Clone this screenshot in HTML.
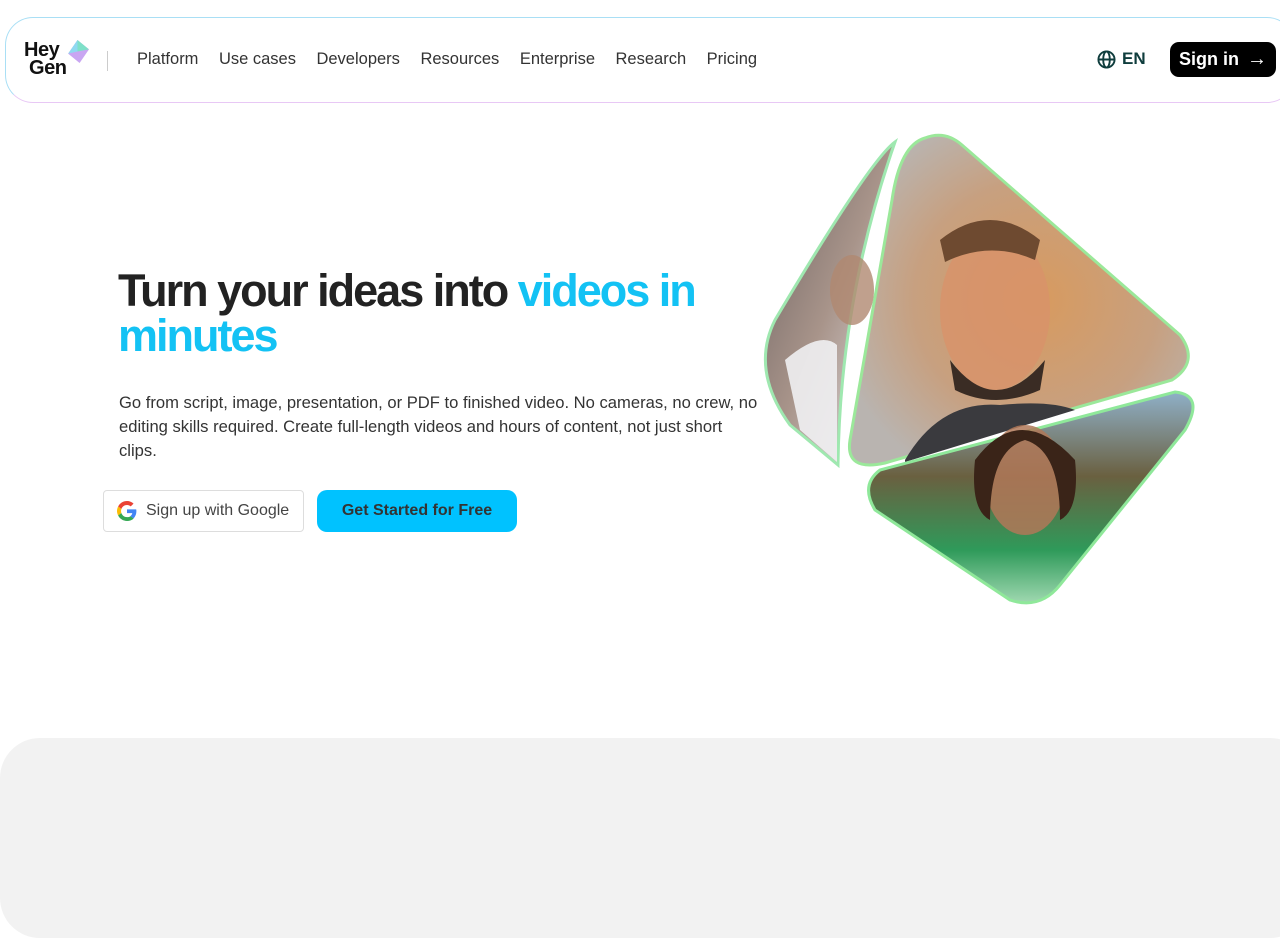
<!DOCTYPE html>
<html><head><meta charset="utf-8">
<style>
*{margin:0;padding:0;box-sizing:border-box}
body{width:1280px;height:853px;overflow:hidden;background:#fff;font-family:"Liberation Sans",sans-serif;position:relative}
.nav{position:absolute;left:5px;top:17px;width:1290px;height:86px;border-radius:28px;border:1.5px solid #a9dff5;border-bottom-color:#e8c8f5;background:#fff}
.logo{position:absolute;left:24px;top:41px;font-weight:bold;font-size:20px;line-height:18px;color:#111;letter-spacing:-0.5px}
.sep{position:absolute;left:107px;top:51px;width:1px;height:20px;background:#ccc}
.links{position:absolute;left:137px;top:50px;font-size:16.5px;color:#333;display:flex;gap:20.5px}
.en{position:absolute;left:1097px;top:49px;font-weight:bold;font-size:17px;color:#0f3d3d;display:flex;align-items:center;gap:6px}
.sign{position:absolute;left:1170px;top:42px;width:106px;height:35px;background:#000;border-radius:9px;color:#fff;font-weight:bold;font-size:18px;display:flex;align-items:center;justify-content:center;gap:8px}
h1{position:absolute;left:118px;top:268px;font-size:45px;line-height:45px;font-weight:bold;color:#222;letter-spacing:-2px;width:640px}
h1 span{color:#13c2f4}
p.d{position:absolute;left:119px;top:391px;width:642px;font-size:16.6px;line-height:24px;color:#333}
.g{position:absolute;left:103px;top:490px;width:201px;height:42px;border:1px solid #ddd;border-radius:4px;display:flex;align-items:center;padding-left:13px;gap:9px;font-size:16px;color:#444}
.b{position:absolute;left:317px;top:490px;width:200px;height:42px;background:#00c2ff;border-radius:10px;font-weight:bold;font-size:16px;color:#333;display:flex;align-items:center;justify-content:center}
.bot{position:absolute;left:0;top:738px;width:1310px;height:200px;background:#f2f2f2;border-radius:40px}
</style></head><body>
<div class="nav"></div>
<div class="logo">Hey<br>&nbsp;Gen</div>
<svg style="position:absolute;left:65px;top:39px" width="25" height="25" viewBox="0 0 24 24"><path d="M12 1 L23 10 L14 23 L3 14 Z" fill="#c9a6f2"/><path d="M12 1 L23 10 L12 12 Z" fill="#7ee0c8"/><path d="M3 14 L12 1 L12 12Z" fill="#8fd9f0"/></svg>
<div class="sep"></div>
<div class="links"><span>Platform</span><span>Use cases</span><span>Developers</span><span>Resources</span><span>Enterprise</span><span>Research</span><span>Pricing</span></div>
<div class="en"><svg width="19" height="19" viewBox="0 0 20 20" fill="none" stroke="#0f3d3d" stroke-width="2"><circle cx="10" cy="10" r="8.5"/><ellipse cx="10" cy="10" rx="3.5" ry="8.5"/><path d="M1.5 10h17"/></svg>EN</div>
<div class="sign">Sign in <span style="font-size:20px">→</span></div>
<h1>Turn your ideas into <span>videos in minutes</span></h1>
<p class="d">Go from script, image, presentation, or PDF to finished video. No cameras, no crew, no editing skills required. Create full-length videos and hours of content, not just short clips.</p>
<div class="g"><svg width="20" height="20" viewBox="0 0 48 48"><path fill="#EA4335" d="M24 9.5c3.5 0 6.6 1.2 9 3.5l6.7-6.7C35.6 2.4 30.2 0 24 0 14.6 0 6.6 5.4 2.7 13.300l7.8 6C12.4 13.7 17.7 9.5 24 9.5z"/><path fill="#4285F4" d="M46.5 24.5c0-1.6-.1-3.1-.4-4.5H24v9h12.7c-.6 3-2.2 5.5-4.7 7.2l7.3 5.7c4.3-4 7.2-9.900 7.2-17.4z"/><path fill="#FBBC05" d="M10.5 28.7c-.5-1.5-.8-3-.8-4.7s.3-3.2.8-4.700l-7.8-6C1 16.6 0 20.2 0 24s1 7.4 2.7 10.7l7.8-6z"/><path fill="#34A853" d="M24 48c6.5 0 11.9-2.1 15.9-5.8l-7.3-5.7c-2.2 1.5-5 2.3-8.600 2.3-6.3 0-11.6-4.2-13.5-9.9l-7.8 6C6.6 42.6 14.6 48 24 48z"/></svg>Sign up with Google</div>
<div class="b">Get Started for Free</div>
<svg style="position:absolute;left:740px;top:120px" width="480" height="490" viewBox="740 120 480 490">
<defs>
<radialGradient id="m" cx="0.55" cy="0.5" r="0.6"><stop offset="0" stop-color="#d89a5e"/><stop offset="0.6" stop-color="#c7a080"/><stop offset="1" stop-color="#b9b4b0"/></radialGradient>
<linearGradient id="l" x1="0" y1="0" x2="1" y2="1"><stop offset="0" stop-color="#6a6060"/><stop offset="0.5" stop-color="#a8948a"/><stop offset="1" stop-color="#e8e8ee"/></linearGradient>
<linearGradient id="bt" x1="0" y1="0" x2="0" y2="1"><stop offset="0" stop-color="#8fb0c8"/><stop offset="0.4" stop-color="#6a6040"/><stop offset="0.75" stop-color="#2f9a5a"/><stop offset="1" stop-color="#9fd8b0"/></linearGradient>
</defs>
<path d="M895 142 Q870 160 775 320 Q750 370 790 425 L838 465 Q840 300 895 142Z" fill="url(#l)" stroke="#9fe8b0" stroke-width="3"/>
<path d="M925 138 Q900 145 892 200 L850 440 Q845 472 885 463 L1172 380 Q1200 362 1180 335 L962 145 Q945 130 925 138Z" fill="url(#m)" stroke="#9be89a" stroke-width="3"/>
<ellipse cx="995" cy="310" rx="55" ry="80" fill="#d8926a" opacity="0.8"/>
<path d="M940 240 Q990 200 1040 240 L1035 260 Q990 240 945 262Z" fill="#6e4a30"/>
<path d="M950 360 Q995 420 1045 360 L1040 390 Q995 410 955 390Z" fill="#3a2c24"/>
<path d="M905 460 Q940 400 1000 405 Q1050 400 1075 410 L905 462Z" fill="#3a3a3e"/>
<path d="M880 470 Q860 485 875 510 L1010 600 Q1040 610 1060 585 L1185 430 Q1205 395 1175 392 Z" fill="url(#bt)" stroke="#8fe89a" stroke-width="3"/>
<ellipse cx="1025" cy="480" rx="40" ry="55" fill="#b07858" opacity="0.85"/>
<path d="M975 460 Q1020 400 1075 460 Q1080 510 1060 520 Q1060 450 1025 440 Q990 450 990 520 Q970 510 975 460Z" fill="#3a2418"/>
<ellipse cx="852" cy="290" rx="22" ry="35" fill="#b08870" opacity="0.8"/>
<path d="M785 360 Q820 330 837 345 L837 462 L800 430Z" fill="#f0f0f2" opacity="0.9"/>
</svg>
<div class="bot"></div>
</body></html>
